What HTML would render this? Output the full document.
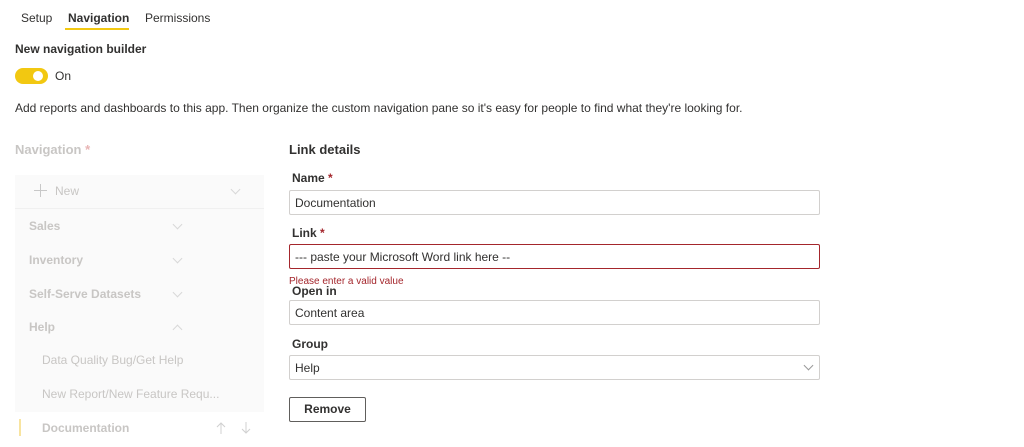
<!DOCTYPE html>
<html><head><style>
body{margin:0;width:1024px;height:447px;background:#fff;font-family:"Liberation Sans",sans-serif;font-size:12px;color:#323130;position:relative;overflow:hidden}
.a{position:absolute;white-space:nowrap;line-height:14px}
.b{font-weight:bold}
.g{color:#c8c6c4}
.in{position:absolute;left:289px;width:529px;height:23px;border:1px solid #d2d0ce;border-radius:2px;box-sizing:content-box}
.in span{position:absolute;left:5px;top:5px;line-height:14px}
.chev{position:absolute;width:6px;height:6px;border-right:1px solid #d8d8d8;border-bottom:1px solid #d8d8d8;transform:rotate(45deg)}
</style></head><body>
<div class="a" style="left:21px;top:11px">Setup</div>
<div class="a b" style="left:68px;top:11px">Navigation</div>
<div class="a" style="left:145px;top:11px">Permissions</div>
<div style="position:absolute;left:65px;top:28px;width:64px;height:2px;background:#f2c811"></div>
<div class="a b" style="left:15px;top:42px">New navigation builder</div>
<div style="position:absolute;left:15px;top:68px;width:33px;height:16px;border-radius:8px;background:#f2c811"></div>
<div style="position:absolute;left:33px;top:71px;width:10px;height:10px;border-radius:5px;background:#fff"></div>
<div class="a" style="left:55px;top:69px">On</div>
<div class="a" style="left:15px;top:101px">Add reports and dashboards to this app. Then organize the custom navigation pane so it's easy for people to find what they're looking for.</div>
<div class="a b" style="left:15px;top:143px;font-size:13px;color:#c8c6c4">Navigation <span style="color:#e8b4b4">*</span></div>
<div style="position:absolute;left:15px;top:175px;width:249px;height:272px;background:#fafafa"></div>
<div style="position:absolute;left:15px;top:208px;width:249px;height:1px;background:#f0f0f0"></div>
<svg style="position:absolute;left:34px;top:184px" width="13" height="13"><path d="M6.5 0V13M0 6.5H13" stroke="#c8c8c8" stroke-width="1"/></svg>
<div class="a g" style="left:55px;top:184px">New</div>
<div class="chev" style="left:232px;top:186px"></div>
<div class="a g b" style="left:29px;top:219px">Sales</div><div class="chev" style="left:174px;top:221px"></div>
<div class="a g b" style="left:29px;top:253px">Inventory</div><div class="chev" style="left:174px;top:255px"></div>
<div class="a g b" style="left:29px;top:287px">Self-Serve Datasets</div><div class="chev" style="left:174px;top:289px"></div>
<div class="a g b" style="left:29px;top:320px">Help</div><div class="chev" style="left:174px;top:326px;transform:rotate(225deg)"></div>
<div class="a g" style="left:42px;top:353px">Data Quality Bug/Get Help</div>
<div class="a g" style="left:42px;top:387px">New Report/New Feature Requ...</div>
<div style="position:absolute;left:15px;top:412px;width:249px;height:35px;background:#fff"></div>
<div style="position:absolute;left:19px;top:419px;width:2px;height:17px;background:#f8e4a0"></div>
<div class="a g b" style="left:42px;top:421px">Documentation</div>
<svg style="position:absolute;left:216px;top:422px" width="36" height="12"><path d="M5 1V12M1 5L5 1L9 5M30 0V11M26 7L30 11L34 7" stroke="#d0d0d0" fill="none" stroke-width="1"/></svg>
<div class="a b" style="left:289px;top:143px;font-size:13px">Link details</div>
<div class="a b" style="left:292px;top:171px">Name <span style="color:#a4262c">*</span></div>
<div class="in" style="top:190px"><span>Documentation</span></div>
<div class="a b" style="left:292px;top:226px">Link <span style="color:#a4262c">*</span></div>
<div class="in" style="top:244px;border-color:#a4262c"><span>--- paste your Microsoft Word link here --</span></div>
<div class="a" style="left:289px;top:276px;font-size:10px;color:#a4262c;line-height:11px">Please enter a valid value</div>
<div class="a b" style="left:292px;top:284px">Open in</div>
<div class="in" style="top:300px"><span>Content area</span></div>
<div class="a b" style="left:292px;top:337px">Group</div>
<div class="in" style="top:355px"><span>Help</span><div class="chev" style="left:515px;top:6px;border-color:#999"></div></div>
<div style="position:absolute;left:289px;top:397px;width:75px;height:23px;border:1px solid #605e5c;border-radius:2px;text-align:center;line-height:23px;font-weight:bold">Remove</div>
</body></html>
